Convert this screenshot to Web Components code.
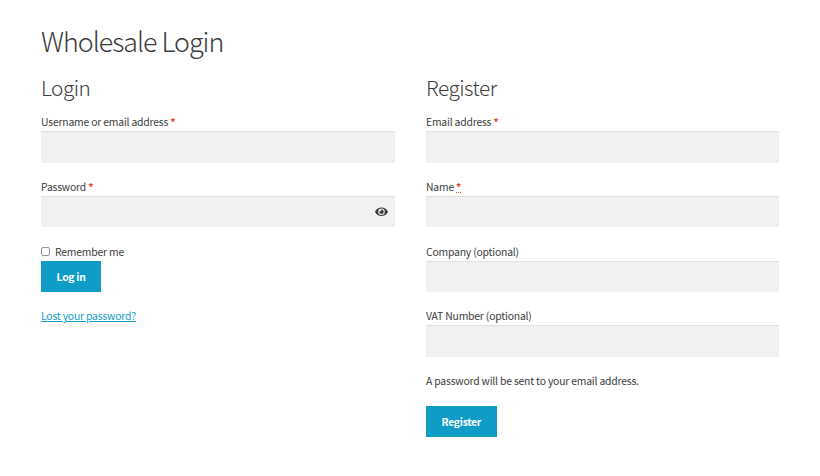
<!DOCTYPE html>
<html lang="en">
<head>
<meta charset="utf-8">
<title>Wholesale Login</title>
<style>
  body {
    margin: 0;
    background: #fff;
    color: #3c3c3c;
    font-family: "Source Sans Pro", "Noto Sans CJK SC", "Open Sans", sans-serif;
    font-size: 10.4px;
    letter-spacing: -0.2px;
    line-height: 18px;
    --color-accent: #0f9dc8;
    --color-required: #f0401c;
    --color-field: #f1f1f1;
  }
</style>
</head>
<body>
<wholesale-page heading="Wholesale Login">
  <account-form heading="Login">
    <form-field label="Username or email address" required></form-field>
    <form-field label="Password" type="password" required></form-field>
    <check-option>Remember me</check-option>
    <action-button>Log in</action-button>
    <text-link>Lost your password?</text-link>
  </account-form>
  <account-form heading="Register">
    <form-field label="Email address" required></form-field>
    <form-field label="Name" required="abbr"></form-field>
    <form-field label="Company (optional)"></form-field>
    <form-field label="VAT Number (optional)"></form-field>
    <form-note>A password will be sent to your email address.</form-note>
    <action-button>Register</action-button>
  </account-form>
</wholesale-page>

<script>
  class WholesalePage extends HTMLElement {
    constructor() {
      super();
      this.attachShadow({ mode: 'open' });
    }

    connectedCallback() {
      this.shadowRoot.innerHTML = `
        <style>
          :host {
            display: block;
            padding: 23px 41px 0;
          }

          h1 {
            margin: 0;
            font-size: 26.8px;
            font-weight: 300;
            letter-spacing: -1px;
            line-height: 36px;
          }

          .columns {
            display: grid;
            grid-template-columns: 353.5px 353px;
            column-gap: 31.5px;
            margin-top: 14px;
          }
        </style>
        <h1>${this.getAttribute('heading')}</h1>
        <div class="columns"><slot></slot></div>
      `;
    }
  }

  class AccountForm extends HTMLElement {
    constructor() {
      super();
      this.attachShadow({ mode: 'open' });
    }

    connectedCallback() {
      this.shadowRoot.innerHTML = `
        <style>
          :host {
            display: block;
          }

          h2 {
            margin: 0 0 12px;
            font-size: 20.8px;
            font-weight: 300;
            letter-spacing: -0.5px;
            line-height: 28px;
          }
        </style>
        <h2>${this.getAttribute('heading')}</h2>
        <slot></slot>
      `;
    }
  }

  class FormField extends HTMLElement {
    constructor() {
      super();
      this.attachShadow({ mode: 'open' });
    }

    connectedCallback() {
      const type = this.getAttribute('type') || 'text';

      this.shadowRoot.innerHTML = `
        <style>
          :host {
            display: block;
            margin-bottom: 15.2px;
          }

          label {
            display: block;
            height: 18px;
            white-space: nowrap;
          }

          .required {
            color: var(--color-required);
            font-weight: 700;
          }

          abbr.required {
            text-decoration: underline dotted 1px;
          }

          .control {
            display: flex;
            align-items: center;
            box-sizing: border-box;
            height: 31.6px;
            padding-right: 7px;
            background: var(--color-field);
            box-shadow: inset 0 1px 1px rgba(0, 0, 0, 0.07);
          }

          input {
            flex: 1;
            min-width: 0;
            padding: 0 10px;
            border: 0;
            outline: 0;
            background: none;
            font: inherit;
          }

          svg {
            width: 13px;
            height: 11.5px;
          }
        </style>
        <label for="input">${this.getAttribute('label')} ${this.renderMark()}</label>
        <div class="control">
          <input id="input" type="${type}">
          ${type === 'password' ? this.renderEye() : ''}
        </div>
      `;
    }

    renderMark() {
      if (!this.hasAttribute('required')) return '';

      const tag = this.getAttribute('required') === 'abbr' ? 'abbr' : 'span';
      return `<${tag} class="required">*</${tag}>`;
    }

    renderEye() {
      return `
        <svg viewBox="0 0 576 512" fill="#3c3c3c" aria-hidden="true">
          <path d="M572.5 241.4C518.3 135.6 410.9 64 288 64S57.7 135.6 3.5 241.4a32.4 32.4 0 0 0 0 29.2C57.7 376.4 165.1 448 288 448s230.3-71.6 284.5-177.4a32.4 32.4 0 0 0 0-29.2zM288 400a144 144 0 1 1 144-144 143.9 143.9 0 0 1-144 144zm0-240a95.3 95.3 0 0 0-25.3 3.8 47.9 47.9 0 0 1-66.9 66.9A95.8 95.8 0 1 0 288 160z"/>
        </svg>
      `;
    }
  }

  class CheckOption extends HTMLElement {
    constructor() {
      super();
      this.attachShadow({ mode: 'open' });
    }

    connectedCallback() {
      this.shadowRoot.innerHTML = `
        <style>
          :host {
            display: block;
          }

          label {
            display: flex;
            align-items: center;
            gap: 5px;
            height: 18px;
          }

          input {
            appearance: none;
            box-sizing: border-box;
            width: 9px;
            height: 9px;
            margin: 0;
            border: 1px solid #949494;
            border-radius: 2px;
            background: #fff;
          }
        </style>
        <label><input type="checkbox"><span><slot></slot></span></label>
      `;
    }
  }

  class ActionButton extends HTMLElement {
    constructor() {
      super();
      this.attachShadow({ mode: 'open' });
    }

    connectedCallback() {
      this.shadowRoot.innerHTML = `
        <style>
          :host {
            display: block;
            height: 31px;
          }

          button {
            height: 100%;
            padding: 1px 15.6px 0;
            border: 0;
            background: var(--color-accent);
            color: #fff;
            font: inherit;
            font-weight: 700;
            letter-spacing: -0.3px;
            white-space: nowrap;
          }
        </style>
        <button type="button"><slot></slot></button>
      `;
    }
  }

  class TextLink extends HTMLElement {
    constructor() {
      super();
      this.attachShadow({ mode: 'open' });
    }

    connectedCallback() {
      this.shadowRoot.innerHTML = `
        <style>
          :host {
            display: block;
            margin-top: 15.4px;
          }

          a {
            color: var(--color-accent);
            text-decoration: underline;
          }
        </style>
        <a href="#"><slot></slot></a>
      `;
    }
  }

  class FormNote extends HTMLElement {
    constructor() {
      super();
      this.attachShadow({ mode: 'open' });
    }

    connectedCallback() {
      this.shadowRoot.innerHTML = `
        <style>
          :host {
            display: block;
            margin-bottom: 15.8px;
          }
        </style>
        <slot></slot>
      `;
    }
  }

  customElements.define('wholesale-page', WholesalePage);
  customElements.define('account-form', AccountForm);
  customElements.define('form-field', FormField);
  customElements.define('check-option', CheckOption);
  customElements.define('action-button', ActionButton);
  customElements.define('text-link', TextLink);
  customElements.define('form-note', FormNote);
</script>
</body>
</html>
